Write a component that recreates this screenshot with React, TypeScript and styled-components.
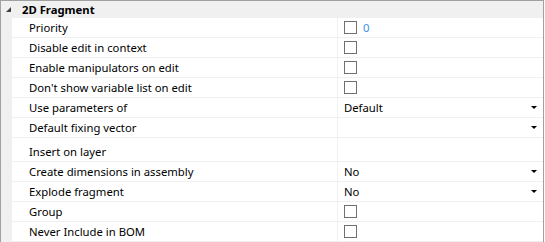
import React from "react";
import styled, { createGlobalStyle } from "styled-components";

const Global = createGlobalStyle`
  html, body { margin: 0; padding: 0; background: #ffffff; }
  body { font-family: "Segoe UI", "Noto Sans", "Open Sans", sans-serif; font-size: 11.3px; color: #000; }
`;

const Frame = styled.div`
  width: 542px;
  border-top: 1px solid #a0a0a0;
  border-left: 1px solid #a0a0a0;
  border-right: 1px solid #a0a0a0;
  background: #ffffff;
`;

const Header = styled.div`
  height: 17px;
  background: #f0f0f0;
  display: flex;
  align-items: center;
  font-weight: bold;
`;

const Toggle = styled.span`
  width: 21px;
  display: flex;
  align-items: center;
  padding-left: 5px;
  box-sizing: border-box;
  height: 100%;
`;

const Row = styled.div<{ $h?: number }>`
  display: grid;
  grid-template-columns: 11px 325px 1px 1fr;
  height: ${(p) => p.$h ?? 20}px;
`;

const Gutter = styled.div`
  background: #f0f0f0;
`;

const Label = styled.div<{ $shift?: number }>`
  padding-left: 17px;
  padding-top: ${(p) => p.$shift ?? 0}px;
  display: flex;
  align-items: center;
  border-bottom: 1px solid #f0f0f0;
  white-space: nowrap;
`;

const Divider = styled.div`
  background: #f0f0f0;
`;

const Value = styled.div`
  padding-left: 6px;
  padding-right: 6px;
  display: flex;
  align-items: center;
  border-bottom: 1px solid #f0f0f0;
  gap: 6px;
`;

const Box = styled.span`
  width: 11px;
  height: 11px;
  border: 1px solid #707070;
  background: #fff;
  display: inline-block;
  flex: none;
`;

const Num = styled.span`
  color: #3a8ee6;
`;

const Text = styled.span`
  flex: 1;
`;

const Arrow = styled.span`
  margin-left: auto;
  width: 0;
  height: 0;
  border-left: 3px solid transparent;
  border-right: 3px solid transparent;
  border-top: 3px solid #000;
  margin-right: 0px;
`;

type Item = { label: string; kind: "check" | "priority" | "select" | "empty"; value?: string; h?: number; shift?: number };

const items: Item[] = [
  { label: "Priority", kind: "priority" },
  { label: "Disable edit in context", kind: "check" },
  { label: "Enable manipulators on edit", kind: "check" },
  { label: "Don't show variable list on edit", kind: "check" },
  { label: "Use parameters of", kind: "select", value: "Default" },
  { label: "Default fixing vector", kind: "select", value: "" },
  { label: "Insert on layer", kind: "empty", h: 24, shift: 3 },
  { label: "Create dimensions in assembly", kind: "select", value: "No" },
  { label: "Explode fragment", kind: "select", value: "No" },
  { label: "Group", kind: "check" },
  { label: "Never Include in BOM", kind: "check" },
];

export default function App() {
  return (
    <>
      <Global />
      <Frame>
        <Header>
          <Toggle>
            <svg width="5" height="5" viewBox="0 0 5 5">
              <path d="M5 0 L5 5 L0 5 Z" fill="#404040" />
            </svg>
          </Toggle>
          2D Fragment
        </Header>
        {items.map((it) => (
          <Row key={it.label} $h={it.h}>
            <Gutter />
            <Label $shift={it.shift}>{it.label}</Label>
            <Divider />
            <Value>
              {it.kind === "check" && <Box />}
              {it.kind === "priority" && (
                <>
                  <Box />
                  <Num>0</Num>
                </>
              )}
              {it.kind === "select" && (
                <>
                  <Text>{it.value}</Text>
                  <Arrow />
                </>
              )}
            </Value>
          </Row>
        ))}
      </Frame>
    </>
  );
}
